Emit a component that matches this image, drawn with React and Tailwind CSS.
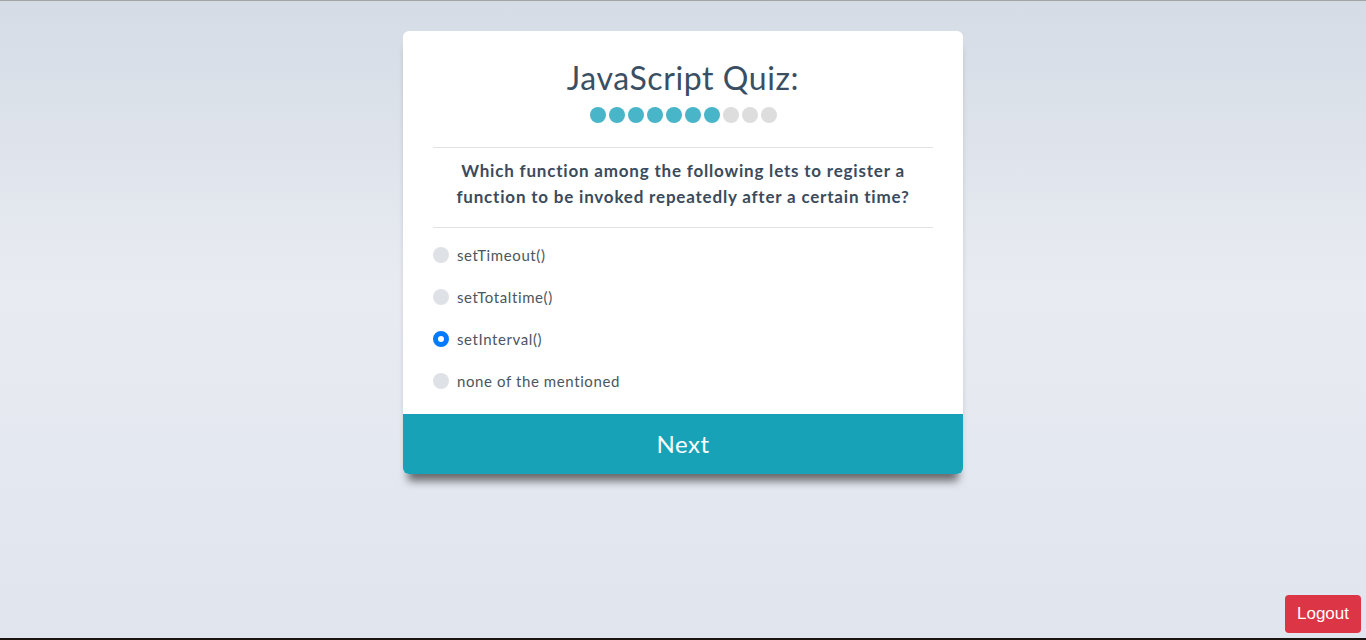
import { useState } from "react";

const options = ["setTimeout()", "setTotaltime()", "setInterval()", "none of the mentioned"];

const Dots = ({ done, total }) => (
  <div className="flex justify-center gap-[3px] mt-[9px]">
    {Array.from({ length: total }).map((_, i) => (
      <span
        key={i}
        className={`w-4 h-4 rounded-full ${i < done ? "bg-[#48b5c8]" : "bg-[#dddddd]"}`}
      />
    ))}
  </div>
);

export default function App() {
  const [picked, setPicked] = useState(2);

  return (
    <div
      className="relative h-[640px] border-t border-t-[#a3a3a3] border-b-2 border-b-[#1a1410] bg-[linear-gradient(180deg,#d5dce5_0%,#e8ebf2_45%,#e0e5ee_100%)] pt-[30px]"
      style={{ fontFamily: "Lato, 'Open Sans', sans-serif" }}
    >
      <div className="mx-auto w-[560px] rounded-md bg-white shadow-[0_12px_8px_-5px_rgba(0,0,0,0.55)]">
        <div className="px-[30px] pt-[27px]">
          <h1 className="text-center text-[32px] leading-[40px] text-[#3a4f63] tracking-[0.6px]">JavaScript Quiz:</h1>
          <Dots done={7} total={10} />
          <div className="mt-6 border-t border-[#e3e3e3]" />
          <p className="px-3 pt-[10px] pb-[17px] text-center text-[17px] leading-[26px] font-bold text-[#3b4b5b] tracking-[0.8px]">
            Which function among the following lets to register a function to be invoked repeatedly after a certain time?
          </p>
          <div className="border-t border-[#e3e3e3]" />
          <div className="pt-[6px] pb-3">
            {options.map((opt, i) => (
              <label key={opt} className="flex h-[42px] items-center gap-2 cursor-pointer" onClick={() => setPicked(i)}>
                <span
                  className={`w-4 h-4 rounded-full ${picked === i ? "bg-white border-[5px] border-[#007bff]" : "bg-[#dee2e6]"}`}
                />
                <span className="text-[15px] text-[#4b5661] tracking-[0.6px]">{opt}</span>
              </label>
            ))}
          </div>
        </div>
        <button className="flex h-[60px] w-full items-center justify-center rounded-b-md bg-[#17a2b8] text-[24px] text-white tracking-[0.5px]">
          Next
        </button>
      </div>

      <button
        className="absolute right-[5px] bottom-[5px] rounded bg-[#dc3545] px-3 py-[7px] text-[17px] leading-6 text-white"
        style={{ fontFamily: "'Liberation Sans', Arial, sans-serif" }}
      >
        Logout
      </button>
    </div>
  );
}
